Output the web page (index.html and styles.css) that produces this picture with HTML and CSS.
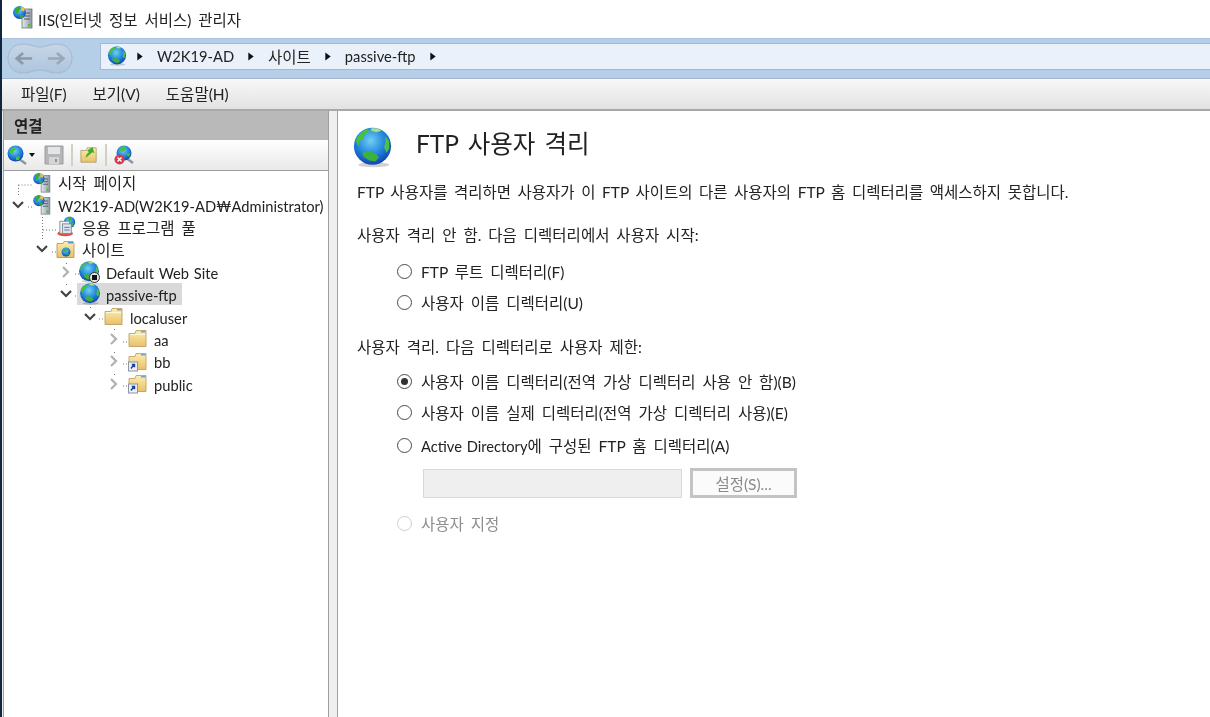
FILE: index.html
```html
<!DOCTYPE html>
<html lang="ko">
<head>
<meta charset="utf-8">
<title>IIS(인터넷 정보 서비스) 관리자</title>
<link rel="stylesheet" href="styles.css">
</head>
<body>
<svg class="defs" width="0" height="0" aria-hidden="true">
  <defs>
    <radialGradient id="gb" cx="0.45" cy="0.35" r="0.7">
      <stop offset="0" stop-color="#6fd0f4"/><stop offset="0.55" stop-color="#2283dc"/><stop offset="1" stop-color="#0c3aa4"/>
    </radialGradient>
    <linearGradient id="gf" x1="0" y1="0" x2="0" y2="1">
      <stop offset="0" stop-color="#fcedb0"/><stop offset="1" stop-color="#e8c168"/>
    </linearGradient>
    <linearGradient id="gs" x1="0" y1="0" x2="1" y2="0">
      <stop offset="0" stop-color="#e4e8ec"/><stop offset="1" stop-color="#8d97a3"/>
    </linearGradient>
    <linearGradient id="gn" x1="0" y1="0" x2="0" y2="1">
      <stop offset="0" stop-color="#c6d6e8"/><stop offset="1" stop-color="#aec5dc"/>
    </linearGradient>
    <symbol id="globe" viewBox="0 0 32 32">
      <ellipse cx="17" cy="29.5" rx="12" ry="2" fill="#000" opacity=".18"/>
      <circle cx="16" cy="15" r="14.5" fill="url(#gb)"/>
      <path d="M3 11c1-4 4-7 8-9l3 1-2 2-3 1 0 3-3 2-1 4z" fill="#47c23c"/>
      <path d="M15 1l5 0 3 2-4 1-4-1z" fill="#a8dd8c"/>
      <path d="M26 7l3 4 0 6-2 3-2-4 1-4z" fill="#4cc042"/>
      <path d="M8 20l6-1 5 2 2 3-3 3-5-1-4-3z" fill="#3cb13c"/>
    </symbol>
    <symbol id="server" viewBox="0 0 22 24">
      <rect x="10" y="4" width="10" height="19" fill="url(#gs)" stroke="#6b747e" stroke-width=".8"/>
      <path d="M12 8h6M12 11h6M12 14h6" stroke="#4f5862" stroke-width="1"/>
      <rect x="16" y="19" width="2.4" height="2.4" fill="#4fc02e"/>
      <circle cx="7.5" cy="7.5" r="6.5" fill="url(#gb)"/>
      <path d="M3 4l4-3 2 2-2 3-1 3-3-1zM8 10l4 0-1 3-3 0z" fill="#39aa34"/>
      <path d="M9 1.500l4 2-1 3-3-1z" fill="#f0c33c"/>
    </symbol>
    <symbol id="pool" viewBox="0 0 22 24">
      <circle cx="15" cy="7" r="6.500" fill="url(#gb)"/>
      <path d="M12 2l5-1 1 3-3 2zM18 7l2 1-1 4-2-1z" fill="#3fb238"/>
      <ellipse cx="10" cy="20" rx="9" ry="3.200" fill="#d9534a"/>
      <rect x="4" y="6" width="11" height="14" fill="#eef1f4" stroke="#7d8792"/>
      <rect x="7" y="9" width="10" height="11" fill="#dde4ec" stroke="#7d8792"/>
      <path d="M9 13h6M9 16h6" stroke="#3a6fb2"/>
    </symbol>
    <symbol id="sites" viewBox="0 0 20 20">
      <path d="M1 4h6l1-2h9l1 2v14H1z" fill="url(#gf)" stroke="#b08f4e" stroke-width=".8"/>
      <rect x="12" y="2.500" width="5" height="1.500" fill="#5b9bd5"/>
      <circle cx="10" cy="12.500" r="4.500" fill="url(#gb)"/>
      <path d="M7 10l3-1 1 2-2 2zM10 15l3-1-1 2z" fill="#3fb238"/>
    </symbol>
    <symbol id="folder" viewBox="0 0 20 20">
      <path d="M1 5h6l1-3h10v16H1z" fill="url(#gf)" stroke="#b9985a" stroke-width=".8"/>
      <rect x="13" y="2.500" width="4.500" height="1.500" fill="#6aa5d8"/>
      <path d="M2 6h15" stroke="#fff8d8"/>
    </symbol>
    <symbol id="shortcut" viewBox="0 0 20 20">
      <path d="M1 5h6l1-3h10v16H1z" fill="url(#gf)" stroke="#b9985a" stroke-width=".8"/>
      <rect x="13" y="2.500" width="4.500" height="1.500" fill="#6aa5d8"/>
      <rect x="0.500" y="10.500" width="9" height="9" fill="#eef0f6" stroke="#8c94a8"/>
      <path d="M3 17l3-4m-2.200 0H6.500v2.700" fill="none" stroke="#1c3f9a" stroke-width="1.400"/>
    </symbol>
    <symbol id="connect" viewBox="0 0 20 20">
      <path d="M11 14l4 2 4 3" fill="none" stroke="#8c97a3" stroke-width="2.500"/>
      <circle cx="8.500" cy="8.500" r="8" fill="url(#gb)"/>
      <path d="M2 7l4-5 3 0-1 3-2 2-1 3zM9 12l4-1-1 4-3 0z" fill="#47c23c"/>
    </symbol>
    <symbol id="disconnect" viewBox="0 0 20 20">
      <path d="M11 13l4 2 4 3" fill="none" stroke="#8c97a3" stroke-width="2.500"/>
      <circle cx="10" cy="8" r="7.500" fill="url(#gb)"/>
      <path d="M5 5l4-4 3 1-1 3-2 2zM12 9l4-1-1 4z" fill="#47c23c"/>
      <circle cx="5.500" cy="14.500" r="5" fill="#d83a4c"/>
      <path d="M3.500 12.500l4 4m0-4l-4 4" stroke="#fff" stroke-width="1.400"/>
    </symbol>
    <symbol id="save" viewBox="0 0 20 20">
      <path d="M1 1h18v18H1z" fill="#b4b7ba" stroke="#9a9da0"/>
      <rect x="4" y="2" width="12" height="7" fill="#e4e5e6"/>
      <rect x="5" y="12" width="10" height="7" fill="#d4d5d6"/>
      <rect x="11" y="14" width="2" height="3" fill="#8f9193"/>
    </symbol>
    <symbol id="up" viewBox="0 0 20 20">
      <path d="M1 5h6l1-3h10v16H1z" fill="url(#gf)" stroke="#a98f58" stroke-width=".8"/>
      <path d="M6 13c1-3 2-5 4-6L8 5l6-4 2 7-2-1c-2 1-4 4-8 6z" fill="#3cae2e"/>
    </symbol>
    <symbol id="back" viewBox="0 0 22 16">
      <path d="M20 8H4M10 2L3 8l7 6" fill="none" stroke-width="3"/>
    </symbol>
    <symbol id="open" viewBox="0 0 12 12"><path d="M2 0l8 6-8 6z"/></symbol>
    <symbol id="closed" viewBox="0 0 12 12"><path d="M3 1l5 5-5 5" fill="none" stroke-width="2.200"/></symbol>
    <symbol id="down" viewBox="0 0 12 12"><path d="M1 3l5 5 5-5" fill="none" stroke-width="2.200"/></symbol>
  </defs>
</svg>

<div class="app">
  <header class="titlebar">
    <svg class="ic-title"><use href="#server"/></svg>
    <span>IIS(인터넷 정보 서비스) 관리자</span>
  </header>

  <div class="addressbar">
    <div class="nav">
      <svg class="nav-shape" viewBox="0 0 66 31">
        <path d="M16 1C24 1 26 4 33 4S42 1 50 1C60 1 65 8 65 15.500S60 30 50 30C42 30 40 27 33 27S24 30 16 30C6 30 1 23 1 15.500S6 1 16 1Z" fill="url(#gn)" stroke="#a3b8cf"/>
      </svg>
      <svg class="nav-arrow"><use href="#back"/></svg>
      <svg class="nav-arrow flip"><use href="#back"/></svg>
    </div>
    <div class="crumbs">
      <svg class="ic-crumb"><use href="#globe"/></svg>
      <svg class="sep"><use href="#open"/></svg>
      <span class="lat">W2K19-AD</span>
      <svg class="sep"><use href="#open"/></svg>
      <span>사이트</span>
      <svg class="sep"><use href="#open"/></svg>
      <span class="lat">passive-ftp</span>
      <svg class="sep"><use href="#open"/></svg>
    </div>
  </div>

  <nav class="menubar">
    <span>파일(F)</span>
    <span>보기(V)</span>
    <span>도움말(H)</span>
  </nav>

  <main class="main">
    <aside class="left">
      <div class="left-head">연결</div>
      <div class="toolbar">
        <svg class="ic20"><use href="#connect"/></svg>
        <span class="caret"></span>
        <svg class="ic20 tb-save"><use href="#save"/></svg>
        <span class="tb-sep"></span>
        <svg class="ic20 tb-up"><use href="#up"/></svg>
        <span class="tb-sep"></span>
        <svg class="ic20"><use href="#disconnect"/></svg>
      </div>
      <div class="tree">
        <svg class="lines" width="200" height="240">
          <path d="M14.500 14H28M14.500 14V24M24 36H28M38.500 46V69M39 59H53M48 81H52M62.500 92v3M62.500 113v3M71 103H75M71 125H74M86.500 136v3M95 148H100M110.500 158v3M110.500 181v3M110.500 203v3M119 171H124M119 193H124M119 215H124" fill="none" stroke="#777" stroke-dasharray="1 2"/>
        </svg>
        <div class="row lv0">
          <span class="chev"></span>
          <svg class="ic-tree"><use href="#server"/></svg>
          <span class="label">시작 페이지</span>
        </div>
        <div class="row lv0">
          <svg class="chev dn"><use href="#down"/></svg>
          <svg class="ic-tree"><use href="#server"/></svg>
          <span class="label lat">W2K19-AD(W2K19-AD₩Administrator)</span>
        </div>
        <div class="row lv1">
          <span class="chev"></span>
          <svg class="ic-tree"><use href="#pool"/></svg>
          <span class="label">응용 프로그램 풀</span>
        </div>
        <div class="row lv1">
          <svg class="chev dn"><use href="#down"/></svg>
          <svg class="ic-tree"><use href="#sites"/></svg>
          <span class="label">사이트</span>
        </div>
        <div class="row lv2">
          <svg class="chev rt"><use href="#closed"/></svg>
          <span class="badged">
            <svg class="ic-globe"><use href="#globe"/></svg>
            <span class="stopped"></span>
          </span>
          <span class="label lat">Default Web Site</span>
        </div>
        <div class="row lv2">
          <svg class="chev dn"><use href="#down"/></svg>
          <span class="selected">
            <svg class="ic-globe"><use href="#globe"/></svg>
            <span class="label lat">passive-ftp</span>
          </span>
        </div>
        <div class="row lv3">
          <svg class="chev dn"><use href="#down"/></svg>
          <svg class="ic-tree"><use href="#folder"/></svg>
          <span class="label lat">localuser</span>
        </div>
        <div class="row lv4">
          <svg class="chev rt"><use href="#closed"/></svg>
          <svg class="ic-tree"><use href="#folder"/></svg>
          <span class="label lat">aa</span>
        </div>
        <div class="row lv4">
          <svg class="chev rt"><use href="#closed"/></svg>
          <svg class="ic-tree"><use href="#shortcut"/></svg>
          <span class="label lat">bb</span>
        </div>
        <div class="row lv4">
          <svg class="chev rt"><use href="#closed"/></svg>
          <svg class="ic-tree"><use href="#shortcut"/></svg>
          <span class="label lat">public</span>
        </div>
      </div>
    </aside>

    <div class="splitter"></div>

    <section class="content">
      <div class="heading">
        <svg class="ic-head"><use href="#globe"/></svg>
        <h1>FTP 사용자 격리</h1>
      </div>
      <p class="desc">FTP 사용자를 격리하면 사용자가 이 FTP 사이트의 다른 사용자의 FTP 홈 디렉터리를 액세스하지 못합니다.</p>
      <p class="group first">사용자 격리 안 함. 다음 디렉터리에서 사용자 시작:</p>
      <div class="radio r1"><span class="dot"></span><span>FTP 루트 디렉터리(F)</span></div>
      <div class="radio r2"><span class="dot"></span><span>사용자 이름 디렉터리(U)</span></div>
      <p class="group second">사용자 격리. 다음 디렉터리로 사용자 제한:</p>
      <div class="radio r3"><span class="dot on"></span><span>사용자 이름 디렉터리(전역 가상 디렉터리 사용 안 함)(B)</span></div>
      <div class="radio r2"><span class="dot"></span><span>사용자 이름 실제 디렉터리(전역 가상 디렉터리 사용)(E)</span></div>
      <div class="radio r4"><span class="dot"></span><span><span class="lat">Active Directory</span>에 구성된 FTP 홈 디렉터리(A)</span></div>
      <div class="field-row">
        <div class="field"></div>
        <div class="btn">설정(S)...</div>
      </div>
      <div class="radio r5 disabled"><span class="dot"></span><span>사용자 지정</span></div>
    </section>
  </main>
</div>
</body>
</html>
```
FILE: styles.css
```css
* { box-sizing: border-box; }
html, body { margin: 0; height: 100%; background: #fff; overflow: hidden; }
body { font-family: Lato, "Noto Sans CJK KR", sans-serif; font-size: 15.5px; word-spacing: 3px; color: #222; }
.defs { display: block; height: 0; }
.lat { font-size: 14.7px; word-spacing: 1px; }

.app { width: 1210px; height: 717px; display: flex; flex-direction: column; border-left: 2px solid #10263f; overflow: hidden; filter: blur(.3px); }

.titlebar { height: 38px; flex: none; display: flex; align-items: center; padding-left: 10px; gap: 4px; background: #fff; color: #222; }
.ic-title { width: 22px; height: 24px; margin-top: -4px; }

.addressbar { height: 41px; flex: none; display: flex; align-items: center; background: #b6cfe9; border-top: 1px solid #a9c2de; border-bottom: 1px solid #a3b4cb; padding: 0 0 0 5px; }
.nav { position: relative; width: 66px; height: 31px; margin-right: 27px; display: flex; align-items: center; justify-content: space-between; padding: 0 7px; }
.nav-shape { position: absolute; left: 0; top: 0; width: 66px; height: 31px; }
.nav-arrow { position: relative; width: 20px; height: 15px; stroke: #8b99a8; }
.nav-arrow.flip { transform: scaleX(-1); stroke: #9aa8b7; }
.crumbs { flex: 1; height: 27px; margin-top: -5px; display: flex; align-items: center; padding-left: 6px; background: #eaf1fa; border: 1px solid #a6b8d0; border-right: 0; color: #222; }
.ic-crumb { width: 20px; height: 20px; margin-right: 9px; }
.sep { width: 8px; height: 9px; margin-right: 13px; fill: #111; }
.crumbs span { margin-right: 13px; }

.menubar { height: 32px; flex: none; display: flex; align-items: center; gap: 26px; padding: 0 0 3px 19px; background: linear-gradient(#f8f8f8, #e2e2e2); border-bottom: 2px solid #a8a8a8; }

.main { flex: 1; display: flex; min-height: 0; background: #ededed; }

.left { width: 326px; flex: none; margin-left: 1px; display: flex; flex-direction: column; background: #fff; border-left: 1px solid #a0a0a0; border-right: 1px solid #a0a0a0; }
.left-head { height: 29px; flex: none; display: flex; align-items: center; padding: 0 0 2px 10px; background: #b9b9b9; font-weight: 700; color: #222; }
.toolbar { height: 31px; flex: none; display: flex; align-items: center; padding-left: 3px; background: linear-gradient(#fff, #e9e9e9); border-bottom: 1px solid #9e9e9e; }
.ic20 { width: 20px; height: 20px; }
.caret { width: 0; height: 0; margin: 0 9px 0 2px; border: 3px solid transparent; border-top: 4px solid #111; border-bottom: 0; }
.tb-sep { width: 2px; height: 22px; margin: 0 7px; background: #d4d0bf; }
.tb-up { width: 18px; }

.tree { position: relative; flex: 1; }
.lines { position: absolute; left: 0; top: 0; pointer-events: none; }
.row { height: 22.4px; display: flex; align-items: center; position: relative; }
.lv0 { padding-left: 8px; }
.lv1 { padding-left: 32px; }
.lv2 { padding-left: 56px; }
.lv3 { padding-left: 80px; }
.lv4 { padding-left: 104px; }
.chev { width: 12px; height: 12px; margin-right: 8px; flex: none; }
.chev.dn { stroke: #444; }
.chev.rt { stroke: #b0b0b0; }
.ic-tree { width: 20px; height: 21px; flex: none; display: block; }
.ic-globe { width: 22px; height: 22px; flex: none; display: block; margin-left: -2px; }
.label { margin-left: 6px; white-space: nowrap; color: #222; }
.label.lat { padding-top: 2px; }
.badged { position: relative; width: 20px; height: 22px; }
.stopped { position: absolute; right: 0; bottom: 0; width: 11px; height: 11px; border-radius: 50%; background: #e4e4e4; border: 1px solid #333; display: flex; align-items: center; justify-content: center; }
.stopped::after { content: ""; width: 5px; height: 5px; background: #111; }
.selected { display: flex; align-items: center; height: 22px; margin-left: -3px; padding: 0 5px 0 4px; background: #d9d9d9; }
.selected .label { margin-left: 5px; }

.splitter { width: 8px; flex: none; background: #efefef; }

.content { flex: 1; background: #fff; border-left: 1px solid #a0a0a0; padding-left: 19px; }
.heading { display: flex; align-items: center; height: 41px; margin-top: 16px; margin-left: -5px; }
.ic-head { width: 41px; height: 41px; flex: none; }
h1 { margin: 0 0 11px 23px; font-size: 24.500px; font-weight: 400; color: #222; }
.desc { margin: 14px 0 0; line-height: 20px; word-spacing: 2.600px; }
.group { margin: 0; line-height: 20px; }
.group.first { margin-top: 23px; }
.group.second { margin-top: 25px; }
.radio { display: flex; align-items: center; height: 20px; margin-left: 40px; gap: 9px; white-space: nowrap; }
.r1 { margin-top: 16px; }
.r2 { margin-top: 11px; }
.r3 { margin-top: 14px; }
.r4 { margin-top: 13px; }
.r5 { margin-top: 15px; }
.dot { width: 15px; height: 15px; border: 1.300px solid #4a4a4a; border-radius: 50%; flex: none; background: #fff; display: flex; align-items: center; justify-content: center; }
.dot.on::after { content: ""; width: 7px; height: 7px; border-radius: 50%; background: #333; }
.disabled { color: #8e8e8e; }
.disabled .dot { border-color: #cfcfcf; }
.field-row { display: flex; align-items: center; gap: 8px; margin: 13px 0 0 66px; }
.field { width: 259px; height: 29px; background: #efefef; border: 1px solid #d9d9d9; }
.btn { width: 107px; height: 30px; display: flex; align-items: center; justify-content: center; background: #fbfbfb; border: 3px solid #c4c4c4; color: #8a8a8a; }
```
